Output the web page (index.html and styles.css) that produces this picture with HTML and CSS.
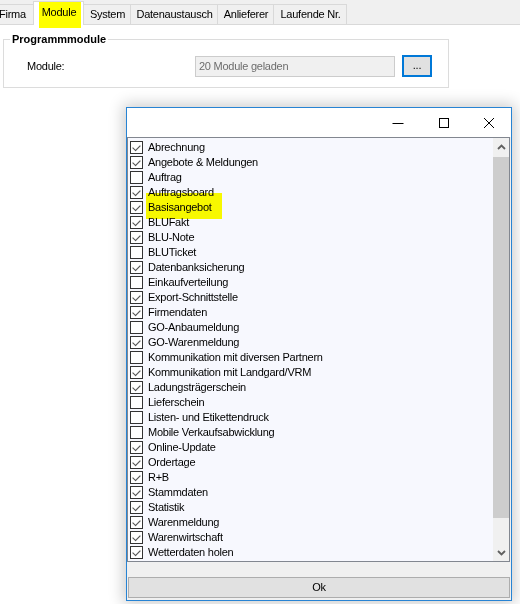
FILE: index.html
```html
<!DOCTYPE html>
<html lang="de">
<head>
<meta charset="utf-8">
<link rel="stylesheet" href="styles.css">
</head>
<body>
<div class="tabstrip">
  <div class="tab t-firma">Firma</div>
  <div class="tab sel t-module">Module</div>
  <div class="tab t-system">System</div>
  <div class="tab t-daten">Datenaustausch</div>
  <div class="tab t-anl">Anlieferer</div>
  <div class="tab t-lfd">Laufende Nr.</div>
</div>
<fieldset class="group">
  <legend>Programmmodule</legend>
  <div class="row">
    <span class="lbl">Module:</span>
    <div class="textbox">20 Module geladen</div>
    <div class="dots">...</div>
  </div>
</fieldset>

<div class="mark mark-tab"></div>

<div class="dialog">
  <div class="titlebar">
    <span class="tb-btn"><svg width="12" height="12" viewBox="0 0 12 12"><path d="M0.5 6.5H11.5" stroke="#000" stroke-width="1"/></svg></span>
    <span class="tb-btn"><svg width="12" height="12" viewBox="0 0 12 12"><rect x="1.5" y="1.5" width="9" height="9" fill="none" stroke="#000" stroke-width="1"/></svg></span>
    <span class="tb-btn"><svg width="12" height="12" viewBox="0 0 12 12"><path d="M1 1L11 11M11 1L1 11" stroke="#000" stroke-width="1"/></svg></span>
  </div>
  <div class="listbox">
    <div class="items">
      <div class="item on"><span class="cb"></span>Abrechnung</div>
      <div class="item on"><span class="cb"></span>Angebote &amp; Meldungen</div>
      <div class="item"><span class="cb"></span>Auftrag</div>
      <div class="item on"><span class="cb"></span>Auftragsboard</div>
      <div class="item on"><span class="cb"></span>Basisangebot</div>
      <div class="item on"><span class="cb"></span>BLUFakt</div>
      <div class="item on"><span class="cb"></span>BLU-Note</div>
      <div class="item"><span class="cb"></span>BLUTicket</div>
      <div class="item on"><span class="cb"></span>Datenbanksicherung</div>
      <div class="item"><span class="cb"></span>Einkaufverteilung</div>
      <div class="item on"><span class="cb"></span>Export-Schnittstelle</div>
      <div class="item on"><span class="cb"></span>Firmendaten</div>
      <div class="item"><span class="cb"></span>GO-Anbaumeldung</div>
      <div class="item on"><span class="cb"></span>GO-Warenmeldung</div>
      <div class="item"><span class="cb"></span>Kommunikation mit diversen Partnern</div>
      <div class="item on"><span class="cb"></span>Kommunikation mit Landgard/VRM</div>
      <div class="item on"><span class="cb"></span>Ladungsträgerschein</div>
      <div class="item"><span class="cb"></span>Lieferschein</div>
      <div class="item"><span class="cb"></span>Listen- und Etikettendruck</div>
      <div class="item"><span class="cb"></span>Mobile Verkaufsabwicklung</div>
      <div class="item on"><span class="cb"></span>Online-Update</div>
      <div class="item on"><span class="cb"></span>Ordertage</div>
      <div class="item on"><span class="cb"></span>R+B</div>
      <div class="item on"><span class="cb"></span>Stammdaten</div>
      <div class="item on"><span class="cb"></span>Statistik</div>
      <div class="item on"><span class="cb"></span>Warenmeldung</div>
      <div class="item on"><span class="cb"></span>Warenwirtschaft</div>
      <div class="item on"><span class="cb"></span>Wetterdaten holen</div>
    </div>
    <div class="scrollbar">
      <div class="sb-arrow"><svg width="9" height="6" viewBox="0 0 9 6"><path d="M1 5L4.5 1.5L8 5" fill="none" stroke="#606060" stroke-width="1.8"/></svg></div>
      <div class="sb-track"><div class="sb-thumb"></div></div>
      <div class="sb-arrow"><svg width="9" height="6" viewBox="0 0 9 6"><path d="M1 1L4.5 4.5L8 1" fill="none" stroke="#606060" stroke-width="1.8"/></svg></div>
    </div>
  </div>
  <div class="footer">
    <div class="okbtn">Ok</div>
  </div>
</div>

<div class="mark mark-basis"></div>
</body>
</html>
```

FILE: styles.css
```css
html, body {
  margin: 0;
  padding: 0;
}
body {
  width: 520px;
  height: 604px;
  overflow: hidden;
  background: #ffffff;
  font-family: "Liberation Sans", Arial, sans-serif;
  font-size: 11px;
  letter-spacing: -0.25px;
  color: #000;
  position: relative;
}

.tabstrip {
  height: 24px;
  background: #f0f0f0;
  border-bottom: 1px solid #d9d9d9;
  display: flex;
  align-items: flex-end;
  margin-left: -1px;
}
.tab {
  box-sizing: border-box;
  height: 20px;
  line-height: 19px;
  border: 1px solid #d9d9d9;
  border-bottom: none;
  background: #f0f0f0;
  margin-left: -1px;
  padding-left: 1px;
  text-align: center;
}
.tab.sel {
  height: 24px;
  margin-bottom: -1px;
  background: #ffffff;
  line-height: 21px;
  position: relative;
  z-index: 1;
}
.t-firma { width: 36px; padding-left: 0; text-align: left; }
.t-module { width: 51px; }
.t-system { width: 48px; }
.t-daten { width: 88px; }
.t-anl { width: 57px; }
.t-lfd { width: 74px; }

.group {
  margin: 8px 0 0 3px;
  padding: 0 0 10px 0;
  width: 446px;
  box-sizing: border-box;
  border: 1px solid #dcdcdc;
  min-width: 0;
}
.group legend {
  font-weight: bold;
  letter-spacing: 0;
  line-height: 13px;
  padding: 0 2px;
  margin-left: 6px;
}
.row {
  display: flex;
  align-items: center;
  margin-top: 9px;
  margin-left: 23px;
}
.lbl {
  width: 168px;
}
.textbox {
  box-sizing: border-box;
  width: 200px;
  height: 21px;
  line-height: 19px;
  border: 1px solid #cccccc;
  background: #f0f0f0;
  color: #6d6d6d;
  padding-left: 3px;
}
.dots {
  box-sizing: border-box;
  width: 30px;
  height: 22px;
  margin-left: 7px;
  border: 2px solid #0078d7;
  background: #e1e1e1;
  text-align: center;
  line-height: 16px;
}

.dialog {
  position: absolute;
  left: 126px;
  top: 107px;
  width: 386px;
  height: 494px;
  box-sizing: border-box;
  border: 1px solid #2783d3;
  background: #f0f0f0;
  box-shadow: 0 0 14px 3px rgba(0, 0, 0, 0.2);
  display: flex;
  flex-direction: column;
}
.titlebar {
  height: 29px;
  background: #ffffff;
  display: flex;
  justify-content: flex-end;
  align-items: center;
}
.tb-btn {
  width: 46px;
  height: 29px;
  display: flex;
  align-items: center;
  justify-content: center;
}
.tb-btn:last-child {
  width: 44px;
}

.listbox {
  box-sizing: border-box;
  width: 383px;
  height: 425px;
  border: 1px solid #828790;
  background: #f7f8fe;
  display: flex;
}
.items {
  flex: 1;
  padding-top: 2px;
  padding-left: 2px;
}
.item {
  height: 15px;
  line-height: 15px;
  display: flex;
  align-items: center;
  white-space: nowrap;
}
.cb {
  box-sizing: border-box;
  width: 13px;
  height: 13px;
  border: 1px solid #333333;
  background: #ffffff;
  margin-right: 5px;
  flex: none;
  position: relative;
}
.item.on .cb::after {
  content: "";
  position: absolute;
  left: 2px;
  top: 0px;
  width: 6px;
  height: 3px;
  border-left: 1px solid #555;
  border-bottom: 1px solid #555;
  transform: translate(0, 3px) rotate(-45deg) scale(1.05, 1.2);
  transform-origin: 50% 50%;
}

.scrollbar {
  width: 16px;
  background: #f0f0f0;
  display: flex;
  flex-direction: column;
}
.sb-arrow {
  height: 17px;
  display: flex;
  align-items: center;
  justify-content: center;
}
.sb-track {
  flex: 1;
  padding-top: 2px;
}
.sb-thumb {
  height: 361px;
  background: #cdcdcd;
}

.footer {
  flex: 1;
  padding-top: 15px;
}
.okbtn {
  box-sizing: border-box;
  width: 382px;
  height: 21px;
  margin-left: 1px;
  border: 1px solid #adadad;
  background: #e1e1e1;
  text-align: center;
  line-height: 19px;
}

.mark {
  position: absolute;
  background: #ffff00;
  mix-blend-mode: multiply;
  z-index: 5;
}
.mark-tab {
  left: 39px;
  top: 2px;
  width: 42px;
  height: 26px;
}
.mark-basis {
  left: 146px;
  top: 193px;
  width: 76px;
  height: 26px;
}
```
